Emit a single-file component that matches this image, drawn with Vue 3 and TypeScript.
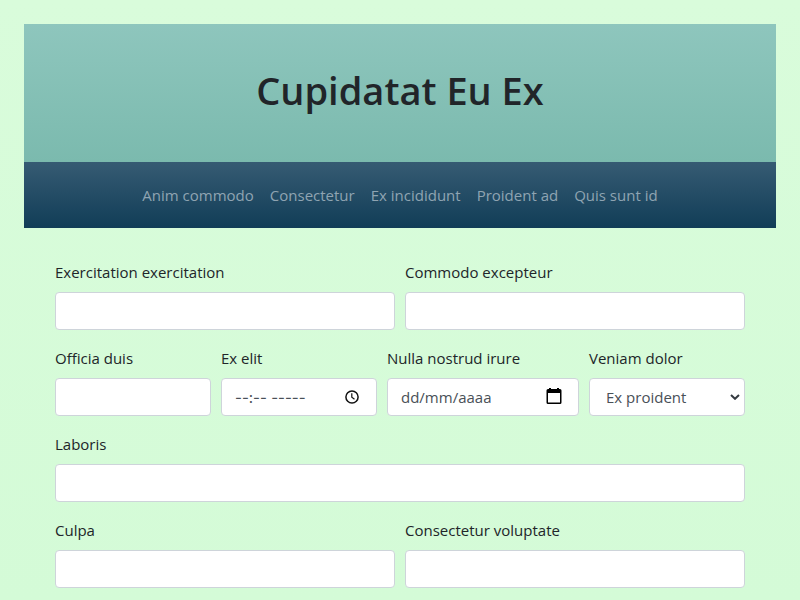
<script setup lang="ts">
import { ref } from 'vue'

interface Field {
  id: string
  label: string
  kind: 'text' | 'time' | 'date' | 'select'
  placeholder?: string
  options?: string[]
}

const links: string[] = ['Anim commodo', 'Consectetur', 'Ex incididunt', 'Proident ad', 'Quis sunt id']

const rows: { layout: string; fields: Field[] }[] = [
  {
    layout: 'halves',
    fields: [
      { id: 'exercitation', label: 'Exercitation exercitation', kind: 'text' },
      { id: 'commodo', label: 'Commodo excepteur', kind: 'text' },
    ],
  },
  {
    layout: 'quarters',
    fields: [
      { id: 'officia', label: 'Officia duis', kind: 'text' },
      { id: 'elit', label: 'Ex elit', kind: 'time', placeholder: '--:-- -----' },
      { id: 'nostrud', label: 'Nulla nostrud irure', kind: 'date', placeholder: 'dd/mm/aaaa' },
      { id: 'veniam', label: 'Veniam dolor', kind: 'select', options: ['Ex proident'] },
    ],
  },
  { layout: 'full', fields: [{ id: 'laboris', label: 'Laboris', kind: 'text' }] },
  {
    layout: 'halves',
    fields: [
      { id: 'culpa', label: 'Culpa', kind: 'text' },
      { id: 'voluptate', label: 'Consectetur voluptate', kind: 'text' },
    ],
  },
]

const values = ref<Record<string, string>>({ veniam: 'Ex proident' })
</script>

<template>
  <div class="page">
    <header class="banner">
      <h1>Cupidatat Eu Ex</h1>
    </header>
    <nav class="menu">
      <a v-for="link in links" :key="link" href="#">{{ link }}</a>
    </nav>
    <form class="form" @submit.prevent>
      <div v-for="(row, i) in rows" :key="i" class="row" :class="row.layout">
        <div v-for="field in row.fields" :key="field.id" class="field">
          <label :for="field.id">{{ field.label }}</label>
          <div class="control">
            <select v-if="field.kind === 'select'" :id="field.id" v-model="values[field.id]">
              <option v-for="option in field.options" :key="option">{{ option }}</option>
            </select>
            <input v-else :id="field.id" v-model="values[field.id]" type="text" :class="field.kind" :placeholder="field.placeholder" />
            <svg v-if="field.kind === 'time'" class="icon" viewBox="0 0 16 16" aria-hidden="true">
              <circle cx="8" cy="9" r="6.1" fill="none" stroke="#111" stroke-width="1.5" />
              <path d="M7.8 5.2V9.2L10.5 11.3" fill="none" stroke="#111" stroke-width="1.2" />
            </svg>
            <svg v-if="field.kind === 'date'" class="icon" viewBox="0 0 16 16" aria-hidden="true">
              <path d="M2 1H3V0H5V1H11V0H13V1H14Q15.500 1 15.500 2.500V14.500Q15.500 16 14 16H2Q.5 16 .5 14.500V2.500Q.5 1 2 1ZM2 5V14.500H14V5Z" fill="#000" fill-rule="evenodd" />
            </svg>
            <svg v-if="field.kind === 'select'" class="chevron" viewBox="0 0 10 6" aria-hidden="true">
              <path d="M1 1L5 4.800L9 1" fill="none" stroke="#343a40" stroke-width="2" />
            </svg>
          </div>
        </div>
      </div>
    </form>
  </div>
</template>

<style>
body {
  background: #d4fbd7;
}
</style>

<style scoped>
* {
  box-sizing: border-box;
}

.page {
  min-height: 100vh;
  padding: 24px 24px 12px;
  background: linear-gradient(#d9fcdb, #d4fbd7);
  color: #212529;
  font-family: "Open Sans", "Noto Sans", sans-serif;
  font-size: 15px;
  line-height: 24px;
}

.banner {
  padding: 42px 16px 48px;
  background: linear-gradient(#8ec6bd, #7bbaae);
  text-align: center;
}

h1 {
  margin: 0;
  font-size: 38px;
  font-weight: 600;
  line-height: 48px;
}

.menu {
  display: flex;
  justify-content: center;
  gap: 16px;
  padding: 21px 16px;
  background: linear-gradient(#365b73, #113d57);
}

.menu a {
  color: #8fa4b2;
  text-decoration: none;
}

.form {
  display: grid;
  gap: 16px;
  padding: 32px 31px 0;
}

.row {
  display: grid;
  gap: 10px;
}

.halves {
  grid-template-columns: 1fr 1fr;
}

.quarters {
  grid-template-columns: 1fr 1fr minmax(192px, 1fr) 1fr;
}

.field {
  min-width: 0;
}

label {
  display: block;
  margin-bottom: 8px;
}

.control {
  position: relative;
}

input,
select {
  display: block;
  width: 100%;
  height: 38px;
  margin: 0;
  padding: 6px 13px;
  border: 1px solid #ced4da;
  border-radius: 4px;
  background: #fff;
  color: #495057;
  font: inherit;
}

input.time {
  font-family: Inter, sans-serif;
}

select {
  appearance: none;
  padding: 6px 16px;
}

input::placeholder {
  color: #495057;
  opacity: 1;
}

.icon {
  position: absolute;
  top: 10px;
  right: 17px;
  width: 16px;
  height: 16px;
  pointer-events: none;
}

.chevron {
  position: absolute;
  top: 16px;
  right: 5px;
  width: 10px;
  height: 6px;
  pointer-events: none;
}
</style>
